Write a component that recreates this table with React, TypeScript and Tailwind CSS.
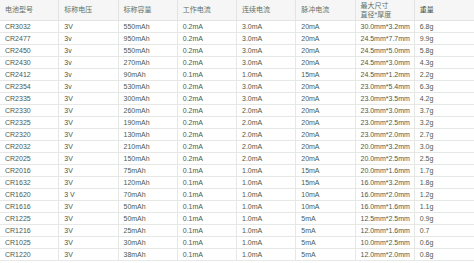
import React from "react";

const rows: string[][] = [
  ["CR3032", "3V", "550mAh", "0.2mA", "3.0mA", "20mA", "30.0mm*3.2mm", "6.8g"],
  ["CR2477", "3v", "950mAh", "0.2mA", "3.0mA", "20mA", "24.5mm*7.7mm", "9.9g"],
  ["CR2450", "3v", "550mAh", "0.2mA", "3.0mA", "20mA", "24.5mm*5.0mm", "5.8g"],
  ["CR2430", "3v", "270mAh", "0.2mA", "3.0mA", "20mA", "24.5mm*3.0mm", "4.3g"],
  ["CR2412", "3v", "90mAh", "0.1mA", "1.0mA", "15mA", "24.5mm*1.2mm", "2.2g"],
  ["CR2354", "3v", "530mAh", "0.2mA", "3.0mA", "20mA", "23.0mm*5.4mm", "6.3g"],
  ["CR2335", "3V", "300mAh", "0.2mA", "3.0mA", "20mA", "23.0mm*3.5mm", "4.2g"],
  ["CR2330", "3V", "260mAh", "0.2mA", "2.0mA", "20mA", "23.0mm*3.0mm", "3.7g"],
  ["CR2325", "3V", "190mAh", "0.2mA", "2.0mA", "20mA", "23.0mm*2.5mm", "3.2g"],
  ["CR2320", "3V", "130mAh", "0.2mA", "2.0mA", "20mA", "23.0mm*2.0mm", "2.7g"],
  ["CR2032", "3V", "210mAh", "0.2mA", "2.0mA", "20mA", "20.0mm*3.2mm", "3.0g"],
  ["CR2025", "3V", "150mAh", "0.2mA", "2.0mA", "20mA", "20.0mm*2.5mm", "2.5g"],
  ["CR2016", "3V", "75mAh", "0.1mA", "1.0mA", "15mA", "20.0mm*1.6mm", "1.7g"],
  ["CR1632", "3V", "120mAh", "0.1mA", "1.0mA", "15mA", "16.0mm*3.2mm", "1.8g"],
  ["CR1620", "3 V", "70mAh", "0.1mA", "1.0mA", "10mA", "16.0mm*2.0mm", "1.2g"],
  ["CR1616", "3V", "50mAh", "0.1mA", "1.0mA", "10mA", "16.0mm*1.6mm", "1.1g"],
  ["CR1225", "3V", "50mAh", "0.1mA", "1.0mA", "5mA", "12.5mm*2.5mm", "0.9g"],
  ["CR1216", "3V", "25mAh", "0.1mA", "1.0mA", "5mA", "12.0mm*1.6mm", "0.7"],
  ["CR1025", "3V", "30mAh", "0.1mA", "1.0mA", "5mA", "10.0mm*2.5mm", "0.6g"],
  ["CR1220", "3V", "38mAh", "0.1mA", "1.0mA", "5mA", "12.0mm*2.0mm", "0.8g"],
];

export default function App() {
  return (
    <div
      className="w-[474px] h-[263px] bg-white overflow-hidden text-[7px] text-[#4c5a4c]"
      style={{ fontFamily: '"Liberation Sans", "Noto Sans CJK SC", sans-serif' }}
    >
      {/* Header */}
      <div className="grid grid-cols-8 h-[21px] bg-[#f5f6f5] text-[#667066]">
        {["电池型号", "标称电压", "标称容量", "工作电流", "连续电流", "脉冲电流"].map((h) => (
          <div key={h} className="flex items-center pl-[5px] border-r border-b border-[#e2e4e2]">
            {h}
          </div>
        ))}
        <div className="flex flex-col justify-center pl-[5px] leading-[9px] border-r border-b border-[#e2e4e2]">
          <span>最大尺寸</span>
          <span>直径*厚度</span>
        </div>
        <div className="flex items-center pl-[5px] border-b border-[#e2e4e2] text-[#445044]">
          重量
        </div>
      </div>

      {/* Rows */}
      {rows.map((r) => (
        <div key={r[0]} className="grid grid-cols-8 h-[12px]">
          {r.map((c, i) => (
            <div
              key={i}
              className={
                "flex items-center pl-[5px] border-b border-[#e6e8e6] whitespace-nowrap leading-none " +
                (i < 7 ? "border-r" : "")
              }
            >
              {c}
            </div>
          ))}
        </div>
      ))}
    </div>
  );
}
